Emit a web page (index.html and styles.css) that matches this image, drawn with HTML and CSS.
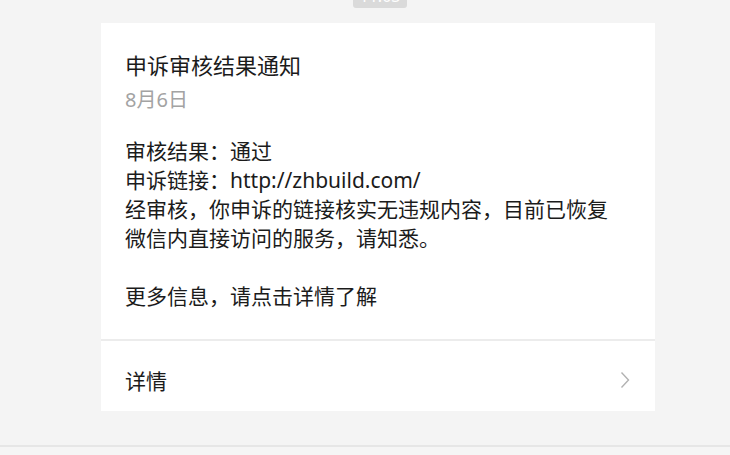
FILE: index.html
```html
<!DOCTYPE html>
<html lang="zh-CN">
  <head>
    <meta charset="UTF-8" />
    <meta name="viewport" content="width=device-width, initial-scale=1.0" />
    <title>申诉审核结果通知</title>
    <link rel="stylesheet" href="styles.css">
  </head>
  <body>
    <div class="chat">
      <div class="time-row">
        <span class="time">11:03</span>
      </div>
      <div class="card">
        <div class="card-body">
          <div class="title">申诉审核结果通知</div>
          <div class="date">8月6日</div>
          <div class="content">
            <p>审核结果：通过</p>
            <p>申诉链接：http://zhbuild.com/</p>
            <p>经审核，你申诉的链接核实无违规内容，目前已恢复微信内直接访问的服务，请知悉。</p>
            <p class="blank">&nbsp;</p>
            <p>更多信息，请点击详情了解</p>
          </div>
        </div>
        <div class="card-footer">
          <span>详情</span>
          <svg class="arrow" width="10" height="18" viewBox="0 0 10 18">
            <path d="M1.5 1.5 L8.5 9 L1.5 16.5" fill="none" stroke="#b2b2b2" stroke-width="1.4" />
          </svg>
        </div>
      </div>
    </div>
    <div class="input-bar"></div>
  </body>
</html>
```

FILE: styles.css
```css
body {
  margin: 0;
  background-color: #f4f4f4;
  font-family: "Noto Sans", "Noto Sans CJK SC", sans-serif;
  color: #1b1b1b;
  height: 455px;
  overflow: hidden;
  display: flex;
  flex-direction: column;
}

.chat {
  flex: 1;
  padding-left: 101px;
  width: 554px;
}

.time-row {
  display: flex;
  justify-content: center;
  height: 8px;
  overflow: hidden;
  margin-bottom: 15px;
}

.time {
  display: block;
  margin-top: -14px;
  margin-right: -4px;
  padding: 1px 7px 2px;
  background-color: #dadada;
  color: #ffffff;
  font-size: 16px;
  line-height: 19px;
  border-radius: 3px;
}

.card {
  background-color: #ffffff;
}

.card-body {
  padding: 27px 24px 28px;
  border-bottom: 2px solid #ececec;
}

.title {
  font-size: 22px;
  line-height: 30px;
}

.date {
  font-size: 20px;
  line-height: 28px;
  color: #a3a3a3;
  margin-top: 6px;
}

.content {
  margin-top: 23px;
  width: 492px;
  font-size: 21px;
  line-height: 29px;
}

.content p {
  margin: 0;
}

.card-footer {
  display: flex;
  align-items: center;
  justify-content: space-between;
  height: 70px;
  padding: 7px 25px 0 24px;
  box-sizing: border-box;
  font-size: 21px;
}

.arrow {
  display: block;
}

.input-bar {
  height: 8px;
  border-top: 2px solid #e6e6e6;
  background-color: #f5f5f5;
}
```
